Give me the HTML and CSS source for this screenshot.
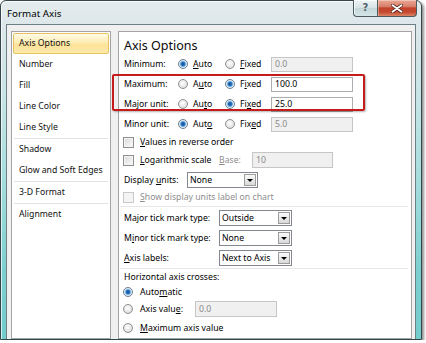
FILE: index.html
```html
<!DOCTYPE html>
<html>
<head>
<meta charset="utf-8">
<title>Format Axis</title>
<link rel="stylesheet" href="styles.css">
</head>
<body>
<div class="window">
  <div class="titlebar">
    <span class="title">Format Axis</span>
    <div class="caption">
      <div class="cbtn help">?</div>
      <div class="cbtn close">
        <svg width="12" height="9" viewBox="0 0 12 9">
          <path d="M1.5 1.2 L10.5 7.8 M10.5 1.2 L1.5 7.8" stroke="#4a2018" stroke-width="3.4" stroke-linecap="round"/>
          <path d="M1.5 1.2 L10.5 7.8 M10.5 1.2 L1.5 7.8" stroke="#ffffff" stroke-width="1.9" stroke-linecap="round"/>
        </svg>
      </div>
    </div>
  </div>
  <div class="client">
    <ul class="nav">
      <li class="item sel">Axis Options</li>
      <li class="item">Number</li>
      <li class="item">Fill</li>
      <li class="item">Line Color</li>
      <li class="item">Line Style</li>
      <li class="sep"></li>
      <li class="item">Shadow</li>
      <li class="item">Glow and Soft Edges</li>
      <li class="sep"></li>
      <li class="item">3-D Format</li>
      <li class="sep"></li>
      <li class="item">Alignment</li>
    </ul>
    <div class="pane">
      <div class="heading">Axis Options</div>

      <div class="bound">
        <span class="lbl">Minimum:</span>
        <span class="opt"><span class="radio on"></span><span><u>A</u>uto</span></span>
        <span class="opt"><span class="radio"></span><span><u>F</u>ixed</span></span>
        <span class="tb dis">0.0</span>
      </div>
      <div class="bound">
        <span class="lbl">Maximum:</span>
        <span class="opt"><span class="radio"></span><span>A<u>u</u>to</span></span>
        <span class="opt"><span class="radio on"></span><span>F<u>i</u>xed</span></span>
        <span class="tb">100.0</span>
      </div>
      <div class="bound">
        <span class="lbl">Major unit:</span>
        <span class="opt"><span class="radio"></span><span>Au<u>t</u>o</span></span>
        <span class="opt"><span class="radio on"></span><span>Fi<u>x</u>ed</span></span>
        <span class="tb">25.0</span>
      </div>
      <div class="bound">
        <span class="lbl">Minor unit:</span>
        <span class="opt"><span class="radio on"></span><span>Aut<u>o</u></span></span>
        <span class="opt"><span class="radio"></span><span>Fix<u>e</u>d</span></span>
        <span class="tb dis">5.0</span>
      </div>

      <div class="row h16 ind">
        <span class="chk"></span><span><u>V</u>alues in reverse order</span>
      </div>
      <div class="row h20 ind log">
        <span class="chk"></span>
        <span><u>L</u>ogarithmic scale</span>
        <span class="muted"><u>B</u>ase:</span>
        <span class="tb dis tall">10</span>
      </div>
      <div class="row h19 units">
        <span>Display <u>u</u>nits:</span>
        <span class="dd"><span class="val">None</span><span class="arr"><i></i></span></span>
      </div>
      <div class="row h16 ind">
        <span class="chk dis"></span><span class="muted"><u>S</u>how display units label on chart</span>
      </div>

      <div class="hsep first"></div>

      <div class="row h20 tick">
        <span>Ma<u>j</u>or tick mark type:</span>
        <span class="dd"><span class="val">Outside</span><span class="arr"><i></i></span></span>
      </div>
      <div class="row h20 tick">
        <span>M<u>i</u>nor tick mark type:</span>
        <span class="dd"><span class="val">None</span><span class="arr"><i></i></span></span>
      </div>
      <div class="row h19 tick">
        <span><u>A</u>xis labels:</span>
        <span class="dd"><span class="val">Next to Axis</span><span class="arr"><i></i></span></span>
      </div>

      <div class="hsep"></div>

      <div class="row h16">Horizontal axis crosses:</div>
      <div class="row h13 ind">
        <span class="radio on"></span><span class="rtext">Auto<u>m</u>atic</span>
      </div>
      <div class="row h22 ind axval">
        <span class="radio"></span><span class="rtext">Axis valu<u>e</u>:</span>
        <span class="tb dis tall">0.0</span>
      </div>
      <div class="row h15 ind">
        <span class="radio"></span><span class="rtext"><u>M</u>aximum axis value</span>
      </div>
    </div>
  </div>
</div>
<div class="callout"></div>
</body>
</html>
```
FILE: styles.css
```css
* { box-sizing: border-box; }

body {
  margin: 0;
  background: #ffffff;
  font-family: "Noto Sans", "Open Sans", sans-serif;
}

.window {
  position: relative;
  width: 422px;
  height: 340px;
  border: 1px solid #36454a;
  border-radius: 6px 6px 0 0;
  padding: 0 5px;
  display: flex;
  flex-direction: column;
  background: linear-gradient(180deg, #e4ebed 0%, #dae6e8 10%, #c6e4e5 30%, #a2dcdc 55%, #7ccfcf 80%, #74cccc 100%);
  box-shadow: inset 1px 1px 0 rgba(255,255,255,0.7), 2px 2px 3px rgba(0,0,0,0.45);
}

.titlebar {
  height: 23px;
  flex: none;
  display: flex;
  align-items: center;
  padding: 1px 0 0 1px;
}

.title {
  font-size: 9.8px;
  color: #000;
}

.caption {
  position: absolute;
  top: -1px;
  right: 4px;
  display: flex;
}

.cbtn {
  height: 17px;
  border: 1px solid #4b5b60;
  border-top: none;
}

.help {
  width: 24px;
  border-right: none;
  border-radius: 0 0 0 4px;
  background: linear-gradient(180deg, #eef4f5 0%, #d7e3e6 48%, #c4d6d9 52%, #d6e6e8 100%);
  color: #52626c;
  font: bold 10px "DejaVu Sans", sans-serif;
  text-align: center;
  line-height: 15px;
  box-shadow: inset 1px 1px 0 rgba(255,255,255,0.7);
}

.close {
  width: 40px;
  border-radius: 0 0 4px 0;
  background: linear-gradient(180deg, #eba896 0%, #d8806c 40%, #c2432b 50%, #c4482e 75%, #dc8466 100%);
  display: flex;
  align-items: center;
  justify-content: center;
  box-shadow: inset 1px 1px 0 rgba(255,255,255,0.35);
}

.client {
  flex: 1;
  min-height: 0;
  overflow: hidden;
  border: 1px solid #6c8085;
  border-bottom: none;
  background: #f0f0f0;
  display: flex;
  gap: 7px;
  padding: 6px 3px 0 4px;
}

.nav {
  width: 100px;
  flex: none;
  margin: 0;
  padding: 1px;
  list-style: none;
  background: #ffffff;
  border: 1px solid #a3a3a3;
}

.item {
  height: 21px;
  line-height: 19px;
  border: 1px solid transparent;
  padding-left: 5px;
  font-size: 8.7px;
  color: #111;
  white-space: nowrap;
}

.item.sel {
  border-color: #e6c261;
  border-radius: 2px;
  background: linear-gradient(180deg, #fffbe6 0%, #fdecb2 45%, #fde29a 55%, #fdeaa9 100%);
}

.sep {
  height: 1px;
  margin: 0 1px;
  background: #e3e3e3;
}

.pane {
  flex: 1;
  background: #ffffff;
  border: 1px solid #a3a3a3;
  padding: 0 3px 0 5px;
  font-size: 8.7px;
  color: #000;
}

.heading {
  height: 22px;
  padding-top: 6px;
  font-size: 12.5px;
  line-height: 16px;
  color: #0a0a0a;
}

.bound {
  height: 20px;
  display: grid;
  grid-template-columns: 54px 47px 46px 82px;
  align-items: center;
  white-space: nowrap;
}

.opt {
  display: flex;
  align-items: center;
  gap: 5px;
}

.row {
  display: flex;
  align-items: center;
  white-space: nowrap;
}

.h13 { height: 13px; }
.h15 { height: 15px; }
.h16 { height: 16px; }
.h19 { height: 19px; }
.h20 { height: 20px; }
.h22 { height: 22px; }

.ind { margin-left: -1px; }

.radio {
  flex: none;
  width: 10px;
  height: 10px;
  border-radius: 50%;
  border: 1px solid #8f9091;
  background: radial-gradient(circle at 45% 40%, #ffffff 0%, #ececec 45%, #cfcfcf 100%);
}

.radio.on {
  border-color: #6a7f92;
  background: radial-gradient(circle at 50% 50%, #154f92 0, #2a70bc 1.8px, #86c0ec 2.8px, #e6eef6 3.5px, #d2d6da 100%);
}

.chk {
  flex: none;
  width: 11px;
  height: 11px;
  margin-right: 6px;
  border: 1px solid #8e8f8f;
  background: linear-gradient(135deg, #d6d6d6 0%, #eeeeee 60%, #fbfbfb 100%);
  box-shadow: inset 0 0 0 1px #f4f4f4;
}

.chk.dis {
  border-color: #c9c9c9;
  background: #f4f4f4;
  box-shadow: none;
}

.rtext { margin-left: 7px; }

.muted { color: #8e8e8e; }

.tb {
  height: 15px;
  border: 1px solid #abadb3;
  background: #ffffff;
  padding-left: 3px;
  line-height: 13px;
  color: #000;
}

.tb.dis {
  background: #f0f0f0;
  border-color: #c6c6c6;
  color: #8a8a8a;
}

.tb.tall { height: 16px; line-height: 14px; }

.log {
  display: grid;
  grid-template-columns: 17px 79px 33px 81px;
  align-items: center;
}

.axval {
  display: grid;
  grid-template-columns: 10px 62px 82px;
  align-items: center;
}

.units {
  display: grid;
  grid-template-columns: 63px 71px;
  align-items: center;
}

.tick {
  display: grid;
  grid-template-columns: 95px 73px;
  align-items: center;
}

.dd {
  height: 16px;
  display: flex;
  border: 1px solid #828790;
  background: #ffffff;
}

.dd .val {
  flex: 1;
  padding-left: 2px;
  line-height: 14px;
  overflow: hidden;
}

.dd .arr {
  width: 12px;
  flex: none;
  margin: 1px;
  border: 1px solid #9c9c9c;
  background: linear-gradient(180deg, #fafafa 0%, #e9e9e9 50%, #d9d9d9 100%);
  display: flex;
  align-items: center;
  justify-content: center;
}

.dd .arr i {
  display: block;
  width: 0;
  height: 0;
  margin-top: 1px;
  border-left: 3px solid transparent;
  border-right: 3px solid transparent;
  border-top: 3px solid #000;
}

.hsep {
  height: 1px;
  margin: 1px 0 0 -4px;
  background: #e6e6e6;
}

.hsep.first { margin-bottom: 1px; }

.callout {
  position: absolute;
  left: 112px;
  top: 74px;
  width: 253px;
  height: 37px;
  border: 2px solid #c61b1b;
  border-radius: 2px;
  box-shadow: 1px 1px 2px rgba(0,0,0,0.3);
}
```
